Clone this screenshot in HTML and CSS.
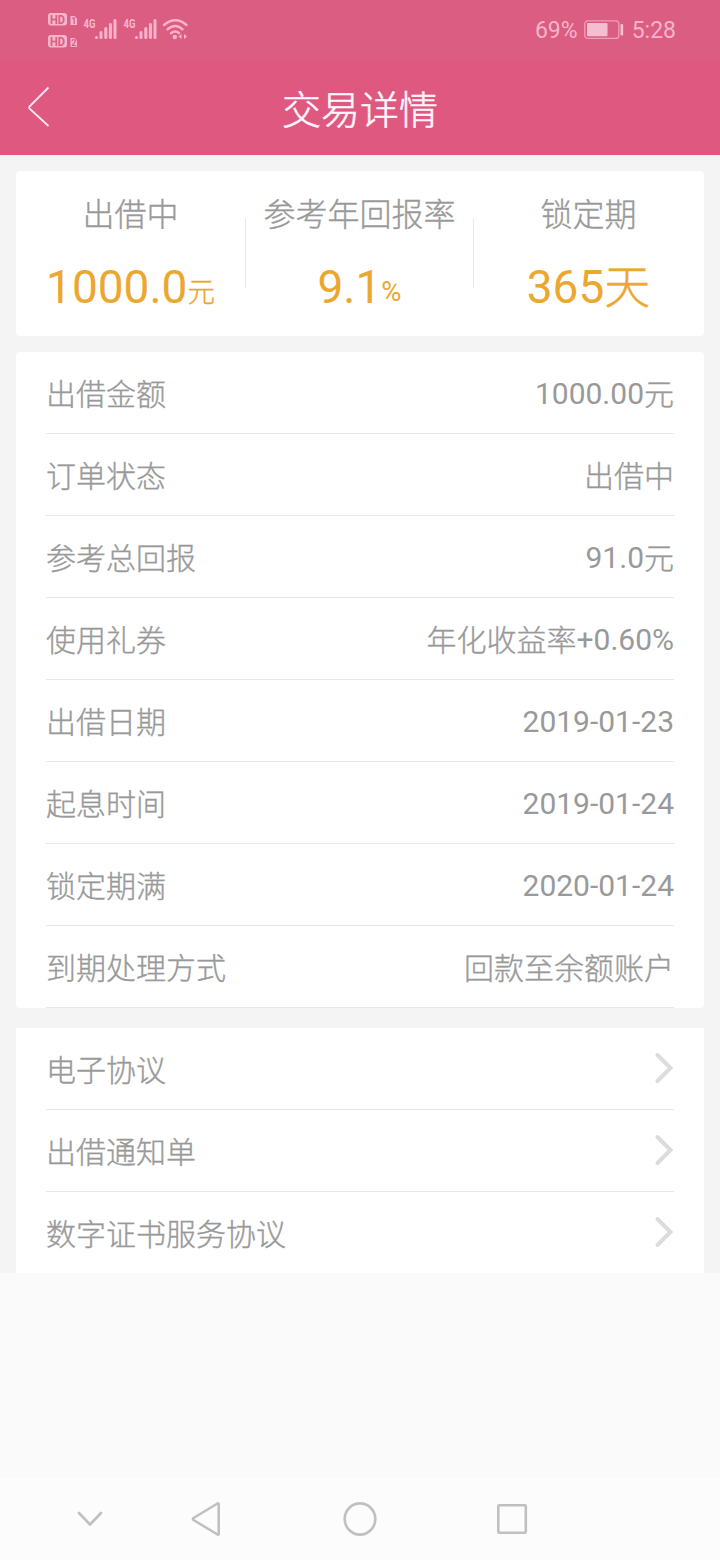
FILE: index.html
```html
<!DOCTYPE html>
<html lang="zh-CN">
<head>
<meta charset="utf-8">
<title>交易详情</title>
<link rel="stylesheet" href="styles.css">
</head>
<body>
<div class="status">
  <svg class="status-left" width="146" height="40" viewBox="0 0 146 40">
    <g fill="#f9b4cb">
      <rect x="0" y="3" width="19" height="12.500" rx="3"/>
      <path d="M22.500 6h4l2.500 2.500v6.500h-6.500z"/>
      <rect x="0" y="25" width="19" height="12.500" rx="3"/>
      <path d="M22.500 28h4l2.500 2.500v6.500h-6.500z"/>
    </g>
    <g class="badge-text">
      <text x="2" y="13.600" textLength="15" lengthAdjust="spacingAndGlyphs">HD</text>
      <text x="2" y="35.600" textLength="15" lengthAdjust="spacingAndGlyphs">HD</text>
      <text class="sim" x="23.300" y="14">1</text>
      <text class="sim" x="23.300" y="36">2</text>
    </g>
    <g class="net-text">
      <text x="35.500" y="18" textLength="12" lengthAdjust="spacingAndGlyphs">4G</text>
      <text x="75.500" y="18" textLength="12" lengthAdjust="spacingAndGlyphs">4G</text>
    </g>
    <g stroke="#f9b4cb" stroke-width="3" stroke-linecap="round">
      <path d="M48.500 27.500v0M53 27.500v-5M57.800 27.500v-9M62.400 27.500v-13M67 27.500v-17"/>
      <path d="M88.500 27.500v0M93 27.500v-5M97.800 27.500v-9M102.400 27.500v-13M107 27.500v-17"/>
    </g>
    <g fill="none" stroke="#f9b4cb" stroke-width="2.400" stroke-linecap="round">
      <path d="M116 15Q127.500 5.500 138.500 15M119.500 19.300Q127.500 12.500 134.500 19.300M123 23.200Q127 20 131 23"/>
    </g>
    <circle cx="126.800" cy="27" r="2.200" fill="#f9b4cb"/>
    <path d="M130.500 26.500l3-2.500v5zM136 24l3 2.500-3 2.500z" fill="#f9b4cb"/>
  </svg>
  <div class="status-right">
    <span class="pct">69%</span>
    <svg class="battery" width="40" height="20" viewBox="0 0 40 20">
      <rect x=".8" y=".8" width="34" height="17.600" rx="3" fill="none" stroke="#eea0ba" stroke-width="1.300"/>
      <rect x="3" y="3" width="20.500" height="13.200" rx="1" fill="#f3bfd0"/>
      <rect x="36.500" y="4" width="2.700" height="11.500" rx="1" fill="#f3bfd0"/>
    </svg>
    <span>5:28</span>
  </div>
</div>
<header class="header">
  <svg class="back" width="24" height="42" viewBox="0 0 24 42">
    <path d="M21.500 1.500L2.500 20.500Q1.500 21.500 2.500 22.500L21.500 40" fill="none" stroke="#fde6ef" stroke-width="1.800"/>
  </svg>
  <h1 class="title">交易详情</h1>
</header>
<main class="content">
  <section class="summary">
    <div class="stat"><div class="label">出借中</div><div class="value">1000.0<small class="cjk">元</small></div></div>
    <div class="stat"><div class="label">参考年回报率</div><div class="value">9.1<small>%</small></div></div>
    <div class="stat"><div class="label">锁定期</div><div class="value">365<span class="cjk">天</span></div></div>
  </section>
  <section class="card details">
    <div class="row"><span class="cjk">出借金额</span><span>1000.00<span class="cjk">元</span></span></div>
    <div class="row"><span class="cjk">订单状态</span><span class="cjk">出借中</span></div>
    <div class="row"><span class="cjk">参考总回报</span><span>91.0<span class="cjk">元</span></span></div>
    <div class="row"><span class="cjk">使用礼券</span><span><span class="cjk">年化收益率</span>+0.60%</span></div>
    <div class="row"><span class="cjk">出借日期</span><span>2019-01-23</span></div>
    <div class="row"><span class="cjk">起息时间</span><span>2019-01-24</span></div>
    <div class="row"><span class="cjk">锁定期满</span><span>2020-01-24</span></div>
    <div class="row"><span class="cjk">到期处理方式</span><span class="cjk">回款至余额账户</span></div>
  </section>
  <section class="card links">
    <div class="row"><span class="cjk">电子协议</span><svg class="arrow" width="20" height="32" viewBox="0 0 20 32"><path d="M3.500 3L16.500 16L3.500 29"/></svg></div>
    <div class="row"><span class="cjk">出借通知单</span><svg class="arrow" width="20" height="32" viewBox="0 0 20 32"><path d="M3.500 3L16.500 16L3.500 29"/></svg></div>
    <div class="row"><span class="cjk">数字证书服务协议</span><svg class="arrow" width="20" height="32" viewBox="0 0 20 32"><path d="M3.500 3L16.500 16L3.500 29"/></svg></div>
  </section>
</main>
<nav class="nav">
  <svg width="720" height="82" viewBox="0 0 720 82" fill="none" stroke="#c0c0c0" stroke-width="2.600" stroke-linecap="round" stroke-linejoin="round">
    <path d="M79 35L90 46.500L101 35"/>
    <path d="M217.500 25.500Q218.700 25 218.700 26.500V55.500Q218.700 57 217.500 56.500L193.500 42Q192.500 41 193.500 40Z"/>
    <ellipse cx="360" cy="41" rx="15.300" ry="15.600"/>
    <rect x="498.300" y="27.300" width="27.500" height="27.400" rx="1"/>
  </svg>
</nav>
</body>
</html>
```
FILE: styles.css
```css
* { box-sizing: border-box; }
body {
  margin: 0;
  width: 720px;
  height: 1560px;
  display: flex;
  flex-direction: column;
  background: #fafafa;
  color: #999;
  font-family: Roboto, "Noto Sans CJK SC", sans-serif;
  font-weight: 400;
}
.cjk {
  font-weight: 300;
  -webkit-text-stroke: .35px currentColor;
}
.status {
  height: 59px;
  display: flex;
  justify-content: space-between;
  padding: 10px 44px 0 48px;
  background: #db5d82;
}
.status-left { display: block; }
.badge-text { fill: #db5d82; font: 700 12.500px Roboto, sans-serif; }
.badge-text .sim { font-size: 9px; }
.net-text { fill: #f9b4cb; font: 700 12px Roboto, sans-serif; }
.status-right {
  display: flex;
  align-items: center;
  height: 40px;
  color: #f3b4c9;
  font-size: 23px;
}
.battery { margin: 0 8px 0 6px; }
.header {
  height: 96px;
  display: grid;
  grid-template-columns: 60px 1fr 60px;
  align-items: center;
  background: #de5880;
}
.back { margin-left: 27px; }
.title {
  margin: 0;
  padding-top: 7px;
  color: #fff5fa;
  font-size: 39px;
  font-weight: 300;
  -webkit-text-stroke: .55px currentColor;
  line-height: 56px;
  text-align: center;
}
.content { background: #f4f4f4; padding: 16px 16px 0; }
.summary {
  height: 165px;
  display: grid;
  grid-template-columns: 230px 228px 230px;
  background: #fff;
  border-radius: 4px;
  margin-bottom: 16px;
}
.stat {
  text-align: center;
  padding: 21px 1px 0 0;
  background: linear-gradient(#e8e8e8, #e8e8e8) right 47px / 1px 70px no-repeat;
}
.stat:last-child { background: none; }
.label {
  font-size: 32px;
  font-weight: 300;
  -webkit-text-stroke: .35px currentColor;
  line-height: 46px;
}
.value {
  margin-top: 19px;
  color: #eba730;
  font-size: 46px;
  line-height: 60px;
  white-space: nowrap;
}
.value small {
  font-size: 27.500px;
  line-height: 1;
  vertical-align: 2px;
}
.value small.cjk { vertical-align: 1px; }
.card { background: #fff; padding: 0 30px; }
.details { border-radius: 4px; margin-bottom: 20px; }
.row {
  height: 82px;
  display: flex;
  justify-content: space-between;
  align-items: center;
  padding-top: 3px;
  border-bottom: 1px solid #e8e8e8;
  font-size: 30px;
  line-height: 44px;
}
.row > .cjk { padding-top: 2px; }
.row span .cjk { line-height: 1; vertical-align: -1px; }
.links .row:last-child { border-bottom: 0; height: 81px; }
.arrow {
  margin-top: -4px;
  fill: none;
  stroke: #dcdcdc;
  stroke-width: 4;
  stroke-linecap: round;
}
.nav { height: 82px; margin-top: auto; background: #fcfcfc; }
.nav svg { display: block; }
```
